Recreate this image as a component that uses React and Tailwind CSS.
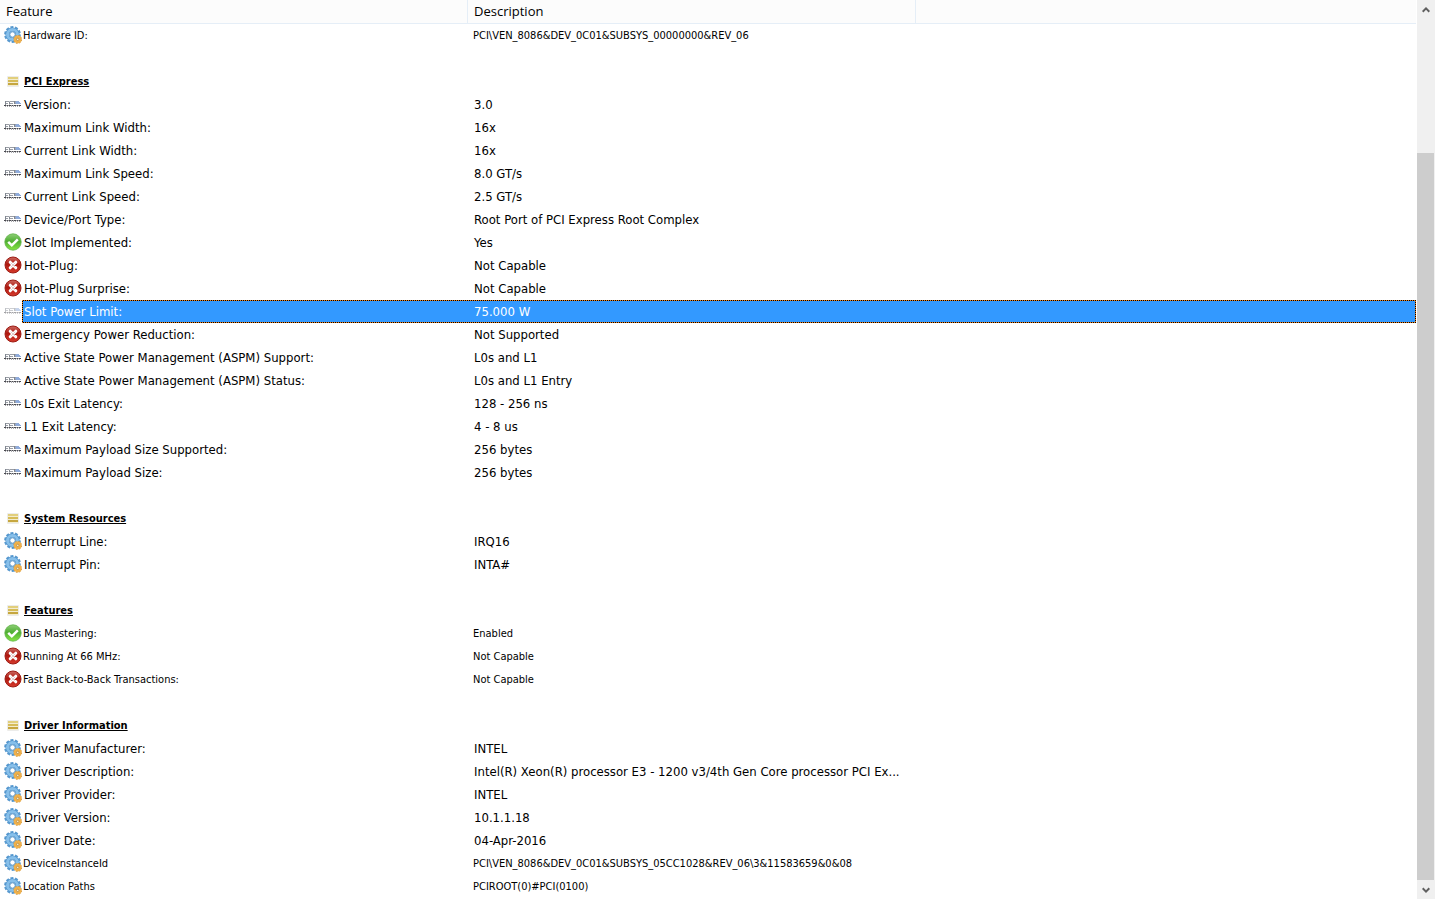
const rows = [
  { icon: 'gear', name: 'Hardware ID:', value: 'PCI\\VEN_8086&DEV_0C01&SUBSYS_00000000&REV_06', small: true },
  {},
  { icon: 'section', name: 'PCI Express', title: true },
  { icon: 'pcie', name: 'Version:', value: '3.0' },
  { icon: 'pcie', name: 'Maximum Link Width:', value: '16x' },
  { icon: 'pcie', name: 'Current Link Width:', value: '16x' },
  { icon: 'pcie', name: 'Maximum Link Speed:', value: '8.0 GT/s' },
  { icon: 'pcie', name: 'Current Link Speed:', value: '2.5 GT/s' },
  { icon: 'pcie', name: 'Device/Port Type:', value: 'Root Port of PCI Express Root Complex' },
  { icon: 'yes', name: 'Slot Implemented:', value: 'Yes' },
  { icon: 'no', name: 'Hot-Plug:', value: 'Not Capable' },
  { icon: 'no', name: 'Hot-Plug Surprise:', value: 'Not Capable' },
  { icon: 'pcie', name: 'Slot Power Limit:', value: '75.000 W', selected: true },
  { icon: 'no', name: 'Emergency Power Reduction:', value: 'Not Supported' },
  { icon: 'pcie', name: 'Active State Power Management (ASPM) Support:', value: 'L0s and L1' },
  { icon: 'pcie', name: 'Active State Power Management (ASPM) Status:', value: 'L0s and L1 Entry' },
  { icon: 'pcie', name: 'L0s Exit Latency:', value: '128 - 256 ns' },
  { icon: 'pcie', name: 'L1 Exit Latency:', value: '4 - 8 us' },
  { icon: 'pcie', name: 'Maximum Payload Size Supported:', value: '256 bytes' },
  { icon: 'pcie', name: 'Maximum Payload Size:', value: '256 bytes' },
  {},
  { icon: 'section', name: 'System Resources', title: true },
  { icon: 'gear', name: 'Interrupt Line:', value: 'IRQ16' },
  { icon: 'gear', name: 'Interrupt Pin:', value: 'INTA#' },
  {},
  { icon: 'section', name: 'Features', title: true },
  { icon: 'yes', name: 'Bus Mastering:', value: 'Enabled', small: true },
  { icon: 'no', name: 'Running At 66 MHz:', value: 'Not Capable', small: true },
  { icon: 'no', name: 'Fast Back-to-Back Transactions:', value: 'Not Capable', small: true },
  {},
  { icon: 'section', name: 'Driver Information', title: true },
  { icon: 'gear', name: 'Driver Manufacturer:', value: 'INTEL' },
  { icon: 'gear', name: 'Driver Description:', value: 'Intel(R) Xeon(R) processor E3 - 1200 v3/4th Gen Core processor PCI Ex...' },
  { icon: 'gear', name: 'Driver Provider:', value: 'INTEL' },
  { icon: 'gear', name: 'Driver Version:', value: '10.1.1.18' },
  { icon: 'gear', name: 'Driver Date:', value: '04-Apr-2016' },
  { icon: 'gear', name: 'DeviceInstanceId', value: 'PCI\\VEN_8086&DEV_0C01&SUBSYS_05CC1028&REV_06\\3&11583659&0&08', small: true },
  { icon: 'gear', name: 'Location Paths', value: 'PCIROOT(0)#PCI(0100)', small: true },
];

const GearIcon = () => (
  <svg viewBox="0 0 18 18" className="size-[18px]" aria-hidden="true">
    <circle cx="8.5" cy="8.5" r="7.2" fill="none" stroke="#5b9bd0" strokeWidth="2.4" strokeDasharray="3 1.52" />
    <circle cx="8.5" cy="8.5" r="5" fill="none" stroke="#4b8fc8" strokeWidth="4.2" />
    <circle cx="8.5" cy="8.5" r="5" fill="none" stroke="#86bfea" strokeWidth="3" />
    <circle cx="8.5" cy="8.5" r="2.7" fill="#fff" stroke="#4b8cc4" strokeWidth="0.9" />
    <circle cx="13.7" cy="13.4" r="3.6" fill="none" stroke="#cf9238" strokeWidth="1.5" strokeDasharray="1.7 1.1" />
    <circle cx="13.7" cy="13.4" r="2.4" fill="none" stroke="#f0b04a" strokeWidth="2.8" />
    <circle cx="13.7" cy="13.4" r="1.2" fill="#fbecc8" stroke="#b9822c" strokeWidth="0.7" />
  </svg>
);

const SectionIcon = () => (
  <svg viewBox="0 0 18 18" className="size-[18px]" aria-hidden="true">
    <rect x="3" y="4" width="12" height="11" rx="1" fill="#ececea" />
    <rect x="4" y="5" width="10" height="2" fill="#e2cf7c" />
    <rect x="4" y="8" width="10" height="2" fill="#d6bc58" />
    <rect x="4" y="11" width="10" height="2" fill="#c6a740" />
    <path d="M4 7.5h10M4 10.5h10M4 13.5h10" stroke="#f3ecce" strokeWidth="1" />
  </svg>
);

const PcieIcon = ({ faded }) => (
  <svg viewBox="0 0 18 18" className={`size-[18px] ${faded ? 'opacity-50' : ''}`} aria-hidden="true">
    <path d="M1 6.5h4M6 6.5h4M11 6.5h1M1 8.5h3M6 8.5h3M10 8.5h2" stroke="#9a9ea6" strokeWidth="1" />
    <path d="M1.5 6v4M5.5 6.5v3M10.5 6v3" stroke="#80868f" strokeWidth="1" />
    <path d="M11 7.5h5M12 6.5h3M12 8.5h5" stroke="#8fabdb" strokeWidth="1" />
    <path d="M0 10.5h17" stroke="#4a4a50" strokeWidth="1" strokeDasharray="2 0.5" />
    <path d="M1 11.5h15" stroke="#a9a9ad" strokeWidth="1" strokeDasharray="1 1" />
  </svg>
);

const YesIcon = () => (
  <svg viewBox="0 0 18 18" className="size-[18px]" aria-hidden="true">
    <defs>
      <linearGradient id="green" x1="0" y1="0" x2="0" y2="1">
        <stop offset="0" stopColor="#8fcf78" />
        <stop offset="0.45" stopColor="#4fae33" />
        <stop offset="1" stopColor="#86e544" />
      </linearGradient>
    </defs>
    <circle cx="9" cy="9" r="8.2" fill="url(#green)" stroke="#62b44a" strokeWidth="0.8" />
    <path d="M4.2 8.8l3.6 3.5 6-6" fill="none" stroke="#fff" strokeWidth="2.5" />
  </svg>
);

const NoIcon = () => (
  <svg viewBox="0 0 18 18" className="size-[18px]" aria-hidden="true">
    <defs>
      <linearGradient id="red" x1="0" y1="0" x2="0" y2="1">
        <stop offset="0" stopColor="#cc6a62" />
        <stop offset="0.45" stopColor="#ad180f" />
        <stop offset="1" stopColor="#d63a2c" />
      </linearGradient>
    </defs>
    <circle cx="9" cy="9" r="8" fill="url(#red)" stroke="#9c1c14" strokeWidth="1" />
    <path d="M6.2 6.2l5.6 5.6M11.8 6.2l-5.6 5.6" stroke="#fff" strokeWidth="3" strokeLinecap="round" />
    <path d="M6.8 6.8l4.4 4.4M11.2 6.8l-4.4 4.4" stroke="#dccac8" strokeWidth="0.9" />
  </svg>
);

const icons = { gear: GearIcon, section: SectionIcon, pcie: PcieIcon, yes: YesIcon, no: NoIcon };

const FeatureRow = ({ row }) => {
  const Icon = icons[row.icon];
  const size = row.small || row.title ? 'pt-px pb-0 text-[11px]' : 'py-0 text-[13px]';

  // the focus rectangle is a one pixel checkerboard that shows round the blue
  if (row.selected) {
    const dotted = 'p-0 bg-[repeating-conic-gradient(#000_0_25%,#f08018_0_50%)] bg-size-[2px_2px]';
    return (
      <tr className="h-[23px] text-white" aria-selected="true">
        <td className="p-0 pb-px pl-1"><Icon faded /></td>
        <td className={dotted}>
          <div className="ml-px h-[21px] bg-[#3399ff] pl-px text-[13px] leading-[21px]">{row.name}</div>
        </td>
        <td className={dotted}>
          <div className="h-[21px] bg-[#3399ff] pl-[6px] text-[13px] leading-[21px]">{row.value}</div>
        </td>
        <td className={dotted}>
          <div className="mr-px h-[21px] bg-[#3399ff]" />
        </td>
      </tr>
    );
  }

  return (
    <tr className="h-[23px]">
      <td className="p-0 pb-[2px] pl-1">{Icon && <Icon />}</td>
      <td className={`pr-1 ${row.small ? 'pl-px' : 'pl-[2px]'} ${size}`}>
        {row.title ? <span className="font-bold underline">{row.name}</span> : row.name}
      </td>
      <td className={`pr-1 ${row.small ? 'pl-[5px]' : 'pl-[6px]'} ${size}`}>{row.value}</td>
      <td className="p-0" />
    </tr>
  );
};

const ScrollBar = () => (
  <div className="flex w-[18px] shrink-0 flex-col bg-[#f0f0f0]">
    <button type="button" aria-label="Scroll up" className="flex h-[19px] shrink-0 items-center justify-center">
      <svg viewBox="0 0 8 6" className="h-[6px] w-[8px]">
        <path d="M0.7 4.7L4 1.4l3.3 3.3" fill="none" stroke="#606060" strokeWidth="2" />
      </svg>
    </button>
    <div className="flex flex-1 flex-col pr-px">
      <div className="grow-[134]" />
      <div className="grow-[727] bg-[#cdcdcd]" />
    </div>
    <button type="button" aria-label="Scroll down" className="flex h-[19px] shrink-0 items-center justify-center">
      <svg viewBox="0 0 8 6" className="h-[6px] w-[8px]">
        <path d="M0.7 1.3L4 4.6l3.3-3.3" fill="none" stroke="#606060" strokeWidth="2" />
      </svg>
    </button>
  </div>
);

const App = () => {
  return (
    <div className="flex h-screen overflow-hidden bg-white text-black">
      <div className="min-w-0 flex-1 overflow-hidden pr-px">
        <table className="w-full table-fixed border-separate border-spacing-0 whitespace-nowrap font-['Tahoma','DejaVu_Sans_Condensed',sans-serif] leading-4">
          <colgroup>
            <col className="w-[22px]" />
            <col className="w-[446px]" />
            <col className="w-[448px]" />
            <col />
          </colgroup>
          <thead>
            <tr className="h-6 bg-[#fcfcfc] text-left font-['Open_Sans',sans-serif] text-[13px] leading-5">
              <th colSpan={2} className="border-r border-b border-[#e5eef7] pt-0 pb-px pl-[6px] font-normal">Feature</th>
              <th className="border-r border-b border-[#e5eef7] pt-0 pb-px pl-[6px] font-normal">Description</th>
              <td className="border-b border-[#e5eef7] p-0" />
            </tr>
          </thead>
          <tbody>
            {rows.map((row, index) => (
              <FeatureRow key={index} row={row} />
            ))}
          </tbody>
        </table>
      </div>
      <ScrollBar />
    </div>
  );
};

export default App;
